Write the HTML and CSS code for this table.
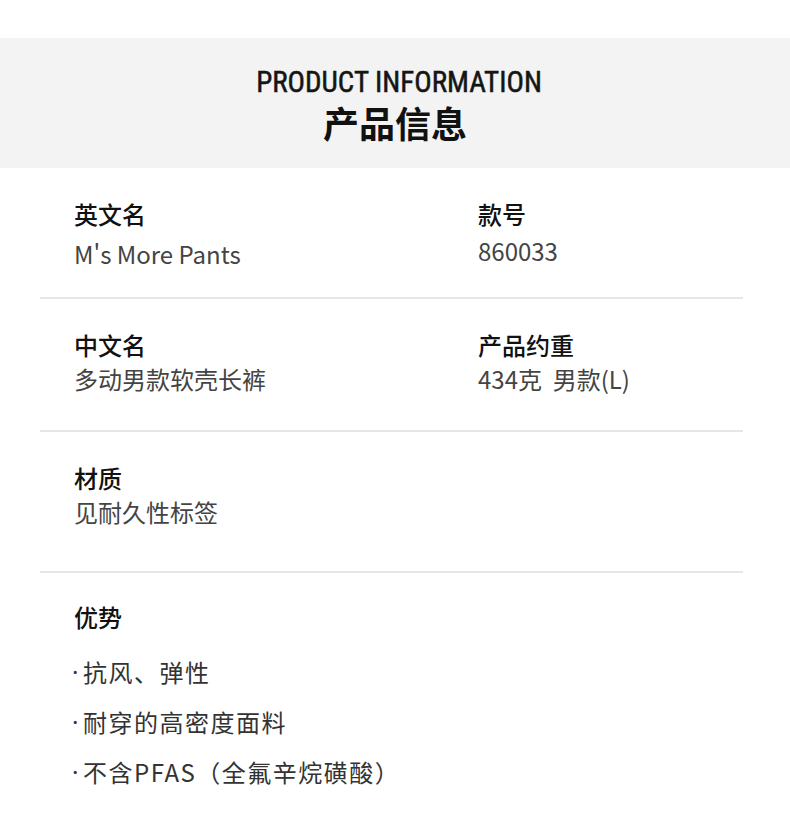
FILE: index.html
```html
<!DOCTYPE html>
<html lang="zh-CN">
<head>
<meta charset="utf-8">
<link rel="stylesheet" href="styles.css">
</head>
<body>
<div class="page">
  <header class="banner">
    <div class="banner-en">PRODUCT INFORMATION</div>
    <div class="banner-cn">产品信息</div>
  </header>
  <main class="info">
    <section class="row row-1">
      <div class="cell">
        <div class="label">英文名</div>
        <div class="value value-en">M's More Pants</div>
      </div>
      <div class="cell">
        <div class="label">款号</div>
        <div class="value value-code">860033</div>
      </div>
    </section>
    <section class="row row-2">
      <div class="cell">
        <div class="label">中文名</div>
        <div class="value">多动男款软壳长裤</div>
      </div>
      <div class="cell">
        <div class="label">产品约重</div>
        <div class="value">434克&nbsp;&nbsp;男款(L)</div>
      </div>
    </section>
    <section class="row row-3">
      <div class="cell">
        <div class="label">材质</div>
        <div class="value">见耐久性标签</div>
      </div>
    </section>
    <section class="row row-4">
      <div class="cell">
        <div class="label">优势</div>
        <ul class="points">
          <li><span class="dot">·</span>抗风、弹性</li>
          <li><span class="dot">·</span>耐穿的高密度面料</li>
          <li><span class="dot">·</span>不含PFAS（全氟辛烷磺酸）</li>
        </ul>
      </div>
    </section>
  </main>
</div>
</body>
</html>
```

FILE: styles.css
```css
html, body {
  margin: 0;
  padding: 0;
  background: #ffffff;
}

.page {
  width: 790px;
  padding-top: 38px;
  font-family: "Noto Sans CJK SC", "Noto Sans", sans-serif;
  color: #111111;
}

.banner {
  background: #f3f3f3;
  height: 130px;
  display: flex;
  flex-direction: column;
  align-items: center;
  box-sizing: border-box;
  padding-top: 28px;
}

.banner-en {
  font-family: "Liberation Sans Narrow", "Roboto", sans-serif;
  font-stretch: condensed;
  font-size: 29px;
  line-height: 33px;
  font-weight: 400;
  -webkit-text-stroke: 0.5px #151515;
  color: #151515;
  padding-left: 8px;
}

.banner-cn {
  font-size: 36px;
  line-height: 46px;
  font-weight: 700;
  color: #111111;
}

.info {
  margin: 0 47px 0 40px;
}

.row {
  display: grid;
  grid-template-columns: 404px 1fr;
  padding: 30px 0 27px 34px;
  border-bottom: 2px solid #e6e6e6;
}

.row-1 {
  padding-bottom: 25px;
}

.row-1 .value-en {
  margin-top: 6px;
}

.row-1 .value-code {
  margin-top: 3px;
}

.row-2 {
  padding-bottom: 33px;
}

.row-3 {
  padding-bottom: 41px;
}

.row-4 {
  border-bottom: none;
  padding-top: 28px;
}

.label {
  font-size: 24px;
  line-height: 32px;
  font-weight: 500;
  color: #111111;
}

.value {
  font-size: 24px;
  line-height: 36px;
  font-weight: 400;
  color: #444444;
}

.points {
  list-style: none;
  margin: 14px 0 0 -1px;
  padding: 0;
}

.points li {
  font-size: 24px;
  line-height: 50px;
  height: 50px;
  letter-spacing: 1.5px;
  color: #333333;
}

.points .dot {
  font-family: "Noto Sans", sans-serif;
  display: inline-block;
  width: 11px;
  margin-left: -1px;
  line-height: 20px;
  vertical-align: top;
  padding-top: 15px;
  letter-spacing: 0;
}
```
